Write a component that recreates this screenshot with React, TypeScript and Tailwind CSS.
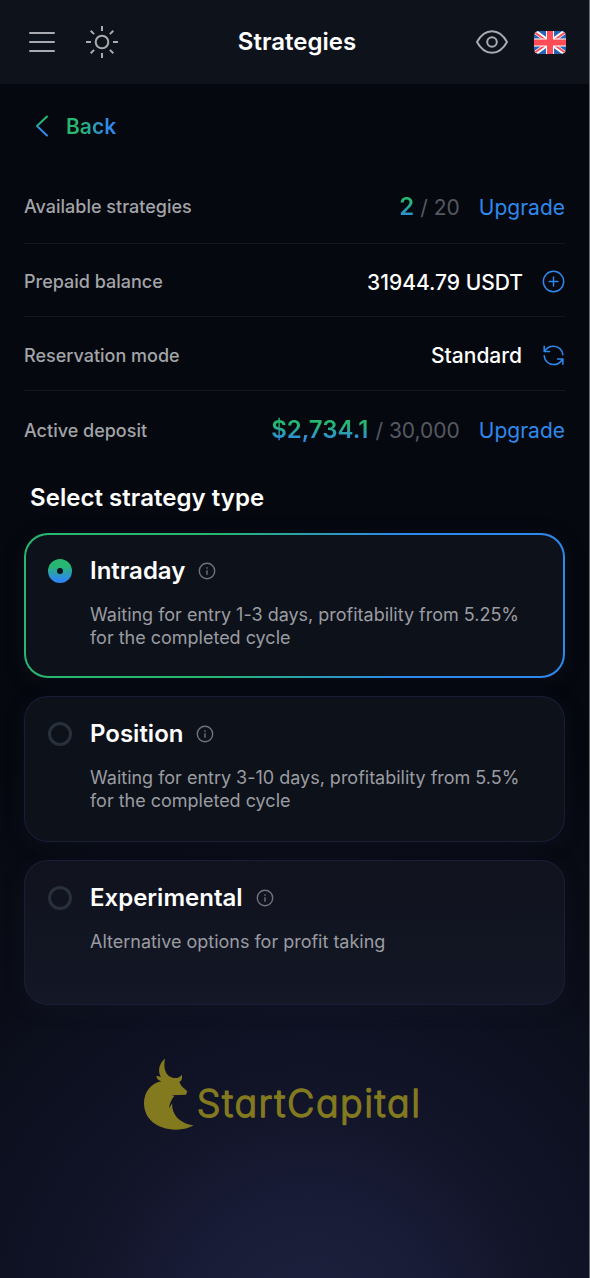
import * as React from 'react';
import clsx from 'clsx';

interface Strategy {
  id: string;
  title: string;
  description: string;
}

const strategies: Strategy[] = [
  {
    id: 'intraday',
    title: 'Intraday',
    description: 'Waiting for entry 1-3 days, profitability from 5.25% for the completed cycle',
  },
  {
    id: 'position',
    title: 'Position',
    description: 'Waiting for entry 3-10 days, profitability from 5.5% for the completed cycle',
  },
  {
    id: 'experimental',
    title: 'Experimental',
    description: 'Alternative options for profit taking',
  },
];

function MenuIcon() {
  return (
    <svg width="28" height="24" viewBox="0 0 28 24" stroke="#a9abb0" strokeWidth="2" strokeLinecap="round">
      <path d="M2 3h24M2 12h24M2 21h24" />
    </svg>
  );
}

function SunIcon() {
  return (
    <svg width="34" height="34" viewBox="-17 -17 34 34" fill="none" stroke="#a9abb0" strokeWidth="2">
      <circle r="6.3" />
      <path d="M0-16v5M0 11v5M-16 0h5M11 0h5M-11.3-11.3l3.4 3.4M11.3-11.3l-3.4 3.4M-11.3 11.3l3.4-3.4M11.3 11.3l-3.4-3.4" />
    </svg>
  );
}

function EyeIcon() {
  return (
    <svg width="34" height="26" viewBox="-17 -13 34 26" fill="none" stroke="#a9abb0" strokeWidth="2" strokeLinejoin="round">
      <path d="M-15 0C-12-5.5-7-10.8 0-10.8S12-5.5 15 0C12 5.5 7 10.8 0 10.8S-12 5.5-15 0Z" />
      <circle r="4.8" />
    </svg>
  );
}

function FlagIcon() {
  return (
    <svg width="32" height="23" viewBox="0 0 32 23" className="rounded-[5px]">
      <path fill="#2864b4" d="M0 0h32v23H0z" />
      <path d="M0 0l32 23M32 0L0 23" stroke="#fff" strokeWidth="4.4" />
      <path d="M0 .8l14 10M32 .8l-14 10M0 22.2l14-10M32 22.2l-14-10" stroke="#ff4b55" strokeWidth="1.8" />
      <path d="M16 0v23M0 11.5h32" stroke="#fff" strokeWidth="8" />
      <path d="M16 0v23M0 11.5h32" stroke="#ff4b55" strokeWidth="6" />
    </svg>
  );
}

function InfoIcon() {
  return (
    <svg width="18" height="18" viewBox="0 0 18 18" fill="none" stroke="#6f737b" strokeWidth="1.4">
      <circle cx="9" cy="9" r="7.7" />
      <path d="M9 8.3v4.5M9 5.2v1.6" />
    </svg>
  );
}

function PlusCircleIcon() {
  return (
    <svg width="23" height="23" viewBox="0 0 24 24" fill="none" stroke="#2f88ec" strokeWidth="1.5" strokeLinecap="round">
      <circle cx="12" cy="12" r="10.6" />
      <path d="M12 7.4v9.2M7.4 12h9.2" />
    </svg>
  );
}

function RefreshIcon() {
  return (
    <svg width="23" height="23" viewBox="0 0 24 24" fill="none" stroke="#2f88ec" strokeWidth="1.6" strokeLinecap="round" strokeLinejoin="round">
      <path d="M21.8 11.2C21.4 6 17 2.3 12 2.3c-4 0-7.4 2-9.5 5.3M2.3 2.3v5.6h5.6" />
      <path d="M2.3 12.4c.3 5 4.5 9.1 9.7 9.1 4 0 7.4-2.2 9.4-5.6M21.8 21.2v-5.6h-5.6" />
    </svg>
  );
}

function Logo() {
  return (
    <svg width="300" height="90" viewBox="0 0 900 270" fill="#837a20">
      <path d="M105 26C90 38 84 56 89 72C90 77 92 80 94 83C90 80 84 77 79 79C80 87 86 92 94 94C62 100 42 127 42 160C42 206 80 239 138 239C160 239 178 234 191 226C160 223 138 206 130 184C127 176 126 168 127 160L117 175C118 163 124 148 133 138L124 136L168 134L172 124C165 116 158 112 154 107L148 96C156 91 158 84 155 74C149 83 139 86 128 83C107 78 99 54 105 26Z" />
      <text
        x="200"
        y="200"
        textLength="670"
        lengthAdjust="spacing"
        stroke="#837a20"
        strokeWidth="4"
        strokeLinejoin="round"
        className="font-['Inter',sans-serif] text-[113px] font-light"
        style={{ fontFeatureSettings: '"cv11"' }}
      >
        StartCapital
      </text>
    </svg>
  );
}

interface StatRowProps {
  label: string;
  last?: boolean;
  children: React.ReactNode;
}

function StatRow({ label, last, children }: StatRowProps) {
  return (
    <div
      className={clsx(
        'flex items-center justify-between border-b',
        last ? 'h-[79px] border-transparent' : 'h-[73.7px] border-[#141724] pt-[3px] first:pt-[1px]'
      )}
    >
      <span className="text-[18px] font-medium text-[#a3a4a8]">{label}</span>
      <div className="flex items-center text-[21px]">{children}</div>
    </div>
  );
}

interface StrategyCardProps {
  strategy: Strategy;
  selected: boolean;
  onSelect: () => void;
}

function StrategyCard({ strategy, selected, onSelect }: StrategyCardProps) {
  return (
    <div
      onClick={onSelect}
      className={clsx(
        'h-[145.3px] cursor-pointer rounded-[24px] shadow-[0_4px_20px_rgba(24,27,40,0.3)]',
        selected ? 'bg-linear-to-r/srgb from-[#27b770] from-35% to-[#2f88ec] to-70% p-[2px]' : 'bg-[#1b1d38] p-px'
      )}
    >
      <div
        className={clsx(
          'flex h-full items-start',
          selected ? 'rounded-[22px] px-[22px] pt-[20px]' : 'rounded-[23px] px-[23px] pt-[21px]',
          strategy.id === 'experimental' ? 'bg-linear-to-b from-[#10131d] to-[#131726]' : 'bg-[#0d111a]'
        )}
      >
        {selected ? (
          <span className="mt-[4px] flex size-6 shrink-0 items-center justify-center rounded-full bg-linear-to-b/srgb from-[#27b770] from-30% to-[#2f88ec] to-85%">
            <span className="size-[6px] rounded-full bg-[#0d111a]" />
          </span>
        ) : (
          <span className="mt-[4px] size-6 shrink-0 rounded-full border-[3px] border-[#28303c]" />
        )}
        <div className="ml-[18px]">
          <div className="flex h-8 items-center gap-[13px]">
            <h3 className="text-[24px] font-semibold text-white">{strategy.title}</h3>
            <InfoIcon />
          </div>
          <p className="mt-[17px] w-[440px] text-[18px] leading-[22.8px] tracking-[-0.01px] text-[#9b9ca1]">{strategy.description}</p>
        </div>
      </div>
    </div>
  );
}

export default function App() {
  const [selected, setSelected] = React.useState('intraday');

  return (
    <div className="flex h-[1278px] w-[590px] flex-col overflow-hidden border-r border-[#6c6e73] bg-[#05080f] bg-[radial-gradient(ellipse_640px_640px_at_310px_1330px,#1d213d_0%,#191c37_20%,#13152a_34%,#0e1122_50%,#0a0d17_72%,#05080f_100%)] font-['Inter',sans-serif]">
      <header className="grid h-[84px] shrink-0 grid-cols-[1fr_auto_1fr] items-center bg-[#0e121b] pr-[23px] pl-7">
        <div className="flex items-center gap-[29px]">
          <MenuIcon />
          <SunIcon />
        </div>
        <h1 className="text-[24px] font-semibold text-white">Strategies</h1>
        <div className="flex items-center justify-end gap-[25px]">
          <EyeIcon />
          <FlagIcon />
        </div>
      </header>

      <main className="flex flex-col pr-[24px] pl-6">
        <button className="mt-[26px] flex h-8 items-center gap-[17px] self-start pl-[11px]">
          <svg width="14" height="22" viewBox="0 0 14 22" fill="none" strokeWidth="2" strokeLinecap="round" strokeLinejoin="round">
            <defs>
              <linearGradient id="back" x1="0" y1="0" x2="0" y2="1">
                <stop offset="0.3" stopColor="#27b770" />
                <stop offset="0.7" stopColor="#2f88ec" />
              </linearGradient>
            </defs>
            <path d="M12 1.5L2 11l10 9.5" stroke="url(#back)" />
          </svg>
          <span className="bg-linear-to-r/srgb from-[#27b770] from-30% to-[#2f88ec] to-80% bg-clip-text pt-[2px] text-[21px] font-semibold text-transparent">
            Back
          </span>
        </button>

        <section className="mt-[28px]">
          <StatRow label="Available strategies">
            <span className="bg-linear-to-b/srgb from-[#27b770] from-35% to-[#2f88ec] to-80% bg-clip-text text-[24px] font-semibold text-transparent">2</span>
            <span className="ml-[6px] pt-[2px] text-[#565960]">/ 20</span>
            <a className="ml-[19px] pt-[2px] text-[#2f88ec]">Upgrade</a>
          </StatRow>
          <StatRow label="Prepaid balance">
            <span className="mr-[19px] pt-[2px] font-medium text-white">31944.79 USDT</span>
            <PlusCircleIcon />
          </StatRow>
          <StatRow label="Reservation mode">
            <span className="mr-[20px] pt-[2px] font-medium text-white">Standard</span>
            <RefreshIcon />
          </StatRow>
          <StatRow label="Active deposit" last>
            <span className="bg-linear-to-b/srgb from-[#27b770] from-35% to-[#2f88ec] to-80% bg-clip-text text-[24px] font-semibold text-transparent">$2,734.1</span>
            <span className="ml-[7px] pt-[2px] text-[#565960]">/ 30,000</span>
            <a className="ml-[19px] pt-[2px] text-[#2f88ec]">Upgrade</a>
          </StatRow>
        </section>

        <h2 className="mt-[12px] ml-[6px] text-[24px] leading-[32px] font-semibold tracking-[0.04px] text-white">Select strategy type</h2>

        <div className="mt-[19px] flex flex-col gap-[18px]">
          {strategies.map((strategy) => (
            <StrategyCard
              key={strategy.id}
              strategy={strategy}
              selected={selected === strategy.id}
              onSelect={() => setSelected(strategy.id)}
            />
          ))}
        </div>
      </main>

      <footer className="mt-[45px] pl-[130px]">
        <Logo />
      </footer>
    </div>
  );
}
